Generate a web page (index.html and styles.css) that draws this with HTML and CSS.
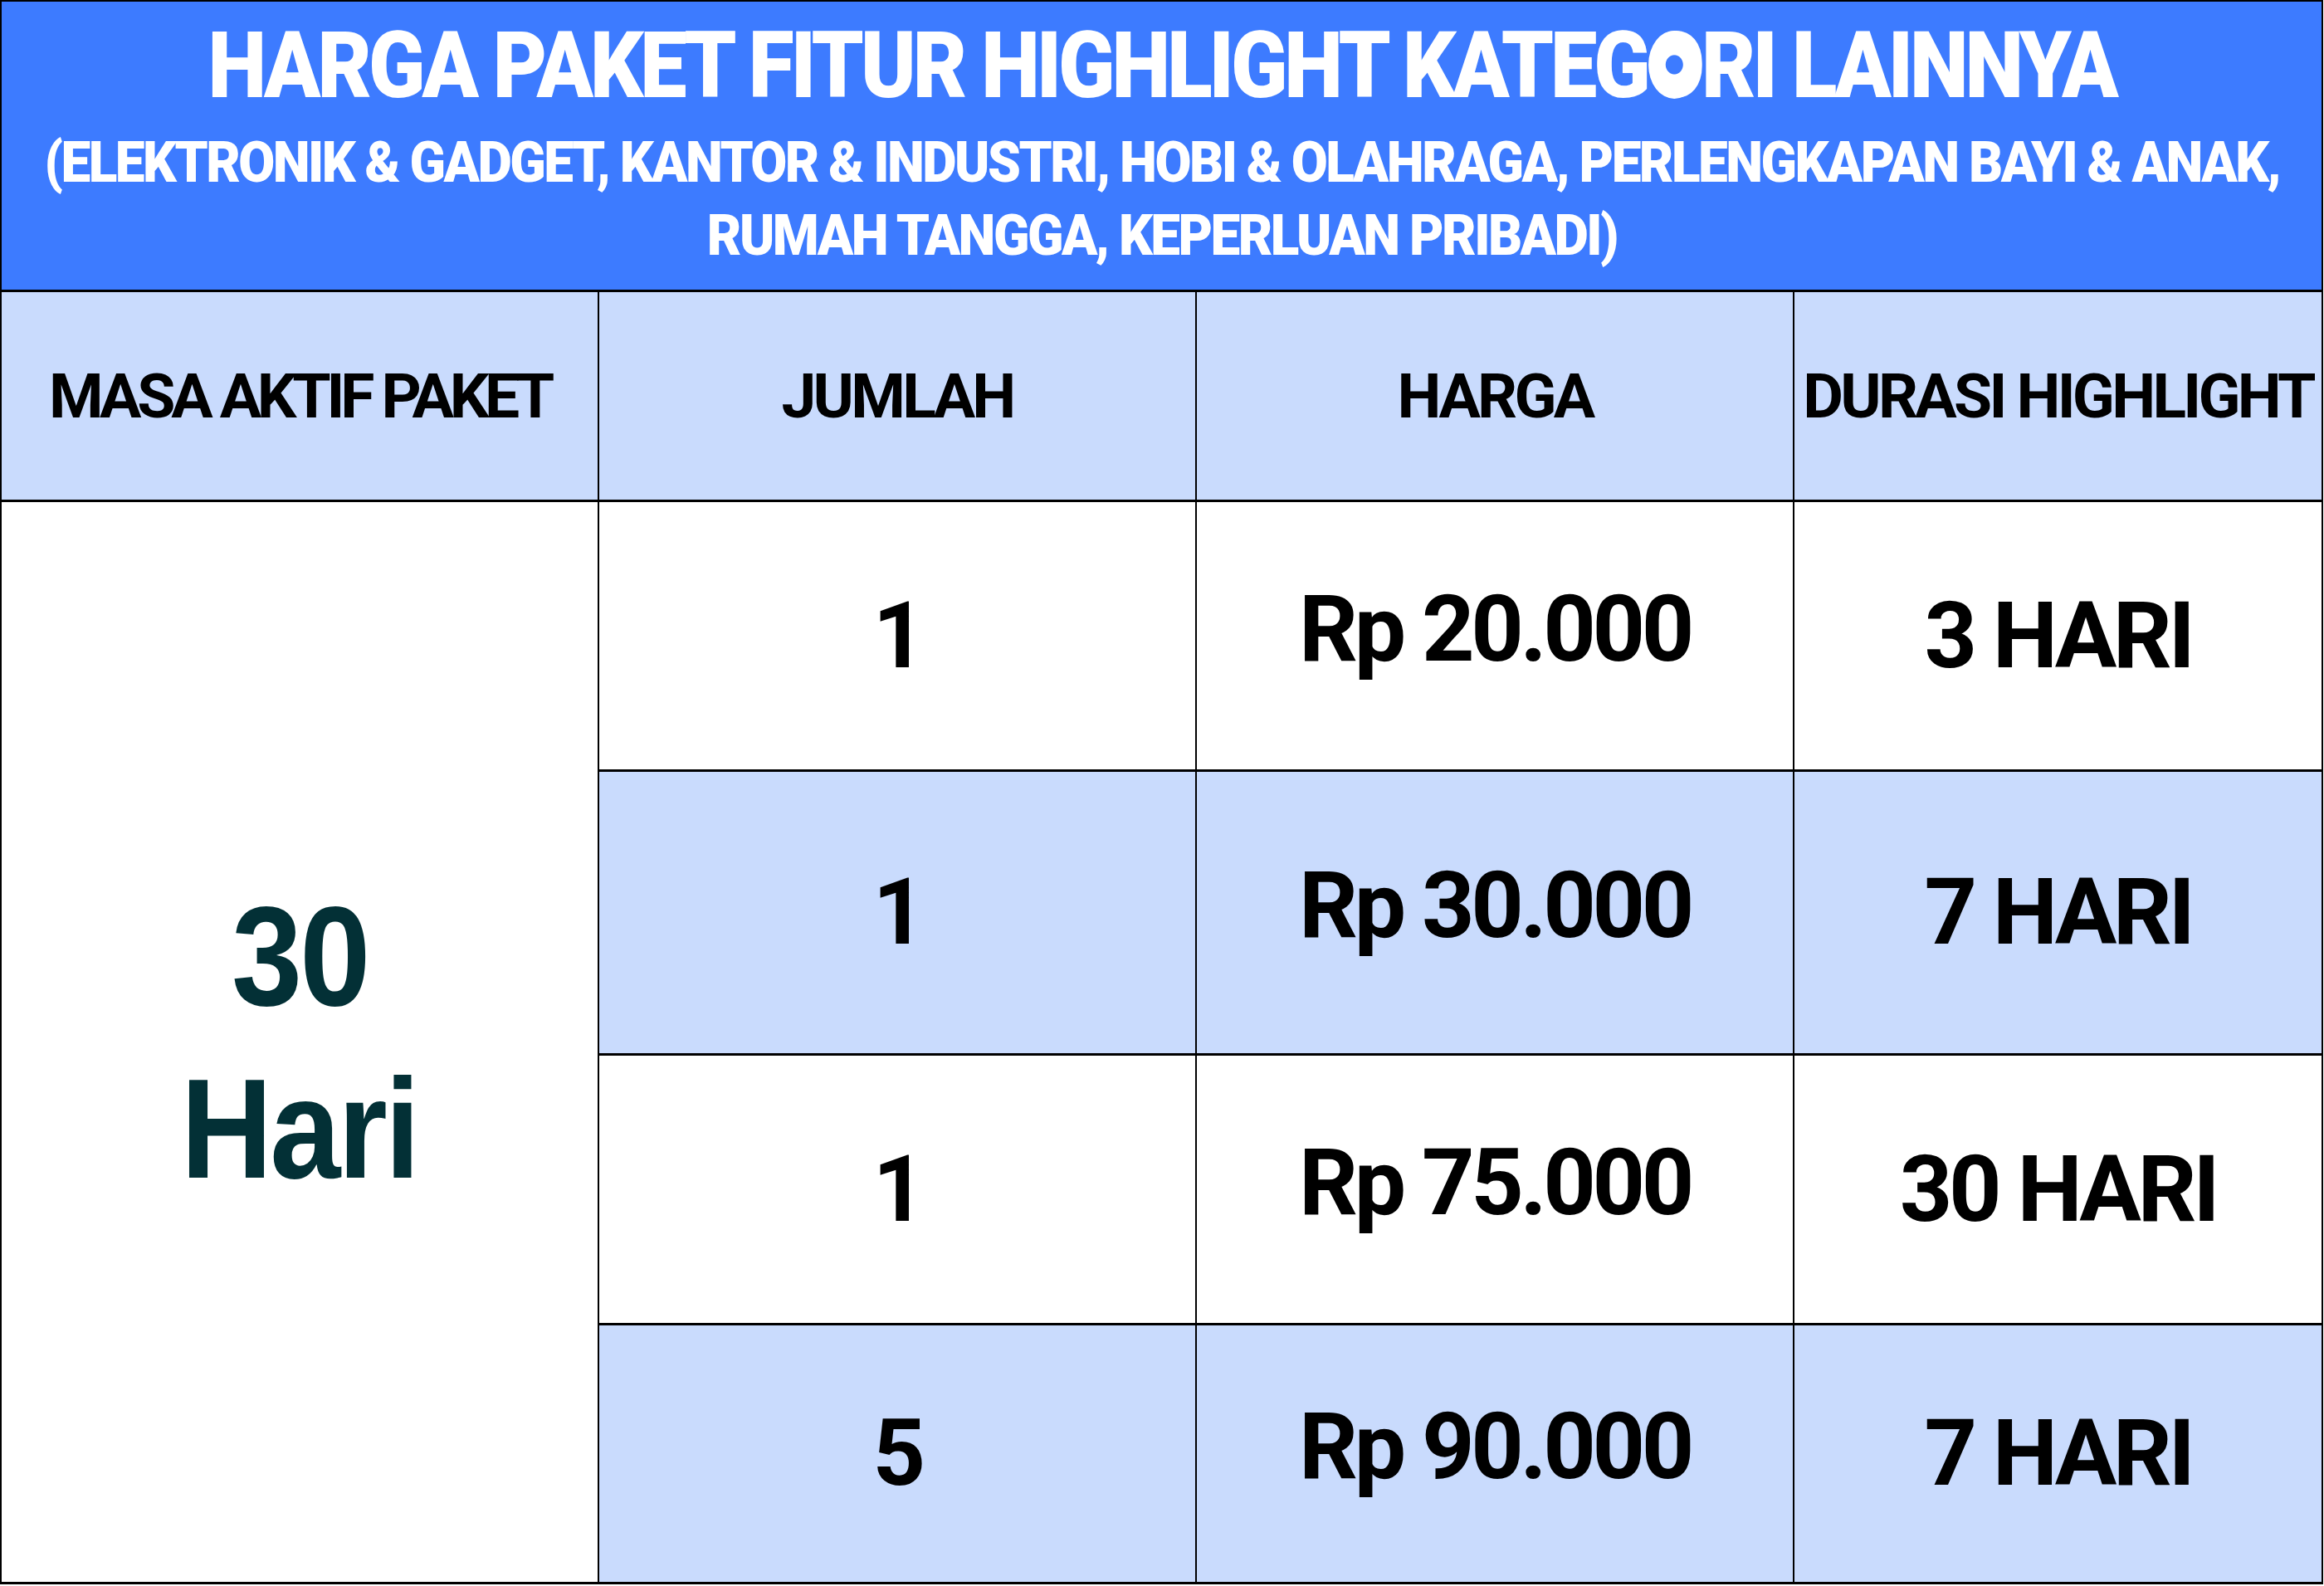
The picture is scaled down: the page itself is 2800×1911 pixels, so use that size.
FILE: index.html
```html
<!DOCTYPE html>
<html lang="id">
<head>
<meta charset="utf-8">
<title>Harga Paket Fitur Highlight Kategori Lainnya</title>
<link rel="stylesheet" href="styles.css">
</head>
<body>
<div class="sheet">
  <div class="banner">
    <div class="banner-title">HARGA PAKET FITUR HIGHLIGHT KATEG<span class="o-dot">O</span>RI LAINNYA</div>
    <div class="banner-sub">(ELEKTRONIK &amp; GADGET, KANTOR &amp; INDUSTRI, HOBI &amp; OLAHRAGA, PERLENGKAPAN BAYI &amp; ANAK,</div>
    <div class="banner-sub">RUMAH TANGGA, KEPERLUAN PRIBADI)</div>
  </div>

  <div class="cell head head-wide">MASA AKTIF PAKET</div>
  <div class="cell head">JUMLAH</div>
  <div class="cell head">HARGA</div>
  <div class="cell head">DURASI HIGHLIGHT</div>

  <div class="cell period"><span>30</span><span>Hari</span></div>

  <div class="cell val">1</div>
  <div class="cell val price">Rp 20.000</div>
  <div class="cell val">3 HARI</div>

  <div class="cell val alt">1</div>
  <div class="cell val alt price">Rp 30.000</div>
  <div class="cell val alt">7 HARI</div>

  <div class="cell val">1</div>
  <div class="cell val price">Rp 75.000</div>
  <div class="cell val">30 HARI</div>

  <div class="cell val alt">5</div>
  <div class="cell val alt price">Rp 90.000</div>
  <div class="cell val alt">7 HARI</div>
</div>
</body>
</html>
```

FILE: styles.css
```css
html, body {
  margin: 0;
  padding: 0;
  background: #ffffff;
}

.sheet {
  display: grid;
  grid-template-columns: 718px 718px 718px 635px;
  grid-template-rows: 347px 250px 322px 339px 322px 309px;
  column-gap: 2px;
  row-gap: 3px;
  padding: 2px 2px 3px 2px;
  background: #000000;
  width: max-content;
}

.banner {
  grid-column: 1 / -1;
  background: #3d7bff;
  color: #ffffff;
  display: flex;
  flex-direction: column;
  align-items: center;
  padding-top: 22px;
  font-family: Roboto, "Liberation Sans", sans-serif;
  font-weight: 900;
  overflow: hidden;
}

.banner-title {
  font-size: 111px;
  line-height: 111px;
  letter-spacing: -0.04em;
  white-space: nowrap;
  transform: scaleX(0.905);
}

.banner-sub {
  font-size: 69px;
  line-height: 88px;
  letter-spacing: -0.04em;
  white-space: nowrap;
  transform: scaleX(0.926);
}

.banner-title + .banner-sub {
  margin-top: 17px;
}

.o-dot {
  position: relative;
}

.o-dot::after {
  content: "";
  position: absolute;
  left: 50%;
  top: 0.5725em;
  width: 0.62em;
  height: 0.74em;
  transform: translate(-50%, -50%);
  border-radius: 50%;
  background: radial-gradient(circle, #3d7bff 0 0.1em, #ffffff calc(0.1em + 1px));
}

.cell {
  display: flex;
  align-items: center;
  justify-content: center;
  background: #ffffff;
  color: #000000;
  font-family: Roboto, "Liberation Sans", sans-serif;
  font-weight: 700;
  white-space: nowrap;
}

.head {
  background: #c9dbfd;
  font-size: 75px;
  line-height: 1;
  letter-spacing: -0.05em;
}

.head-wide {
  letter-spacing: -0.07em;
}

.val {
  font-size: 111px;
  line-height: 1;
  letter-spacing: -0.04em;
}

.price {
  padding-bottom: 16px;
}

.alt {
  background: #c9dbfd;
}

.period {
  grid-column: 1;
  grid-row: 3 / 7;
  flex-direction: column;
  color: #033036;
  font-family: "Liberation Sans", Arial, sans-serif;
  font-size: 170px;
  line-height: 208px;
  letter-spacing: -0.02em;
}

.period span {
  transform: scaleX(0.9);
}
```
